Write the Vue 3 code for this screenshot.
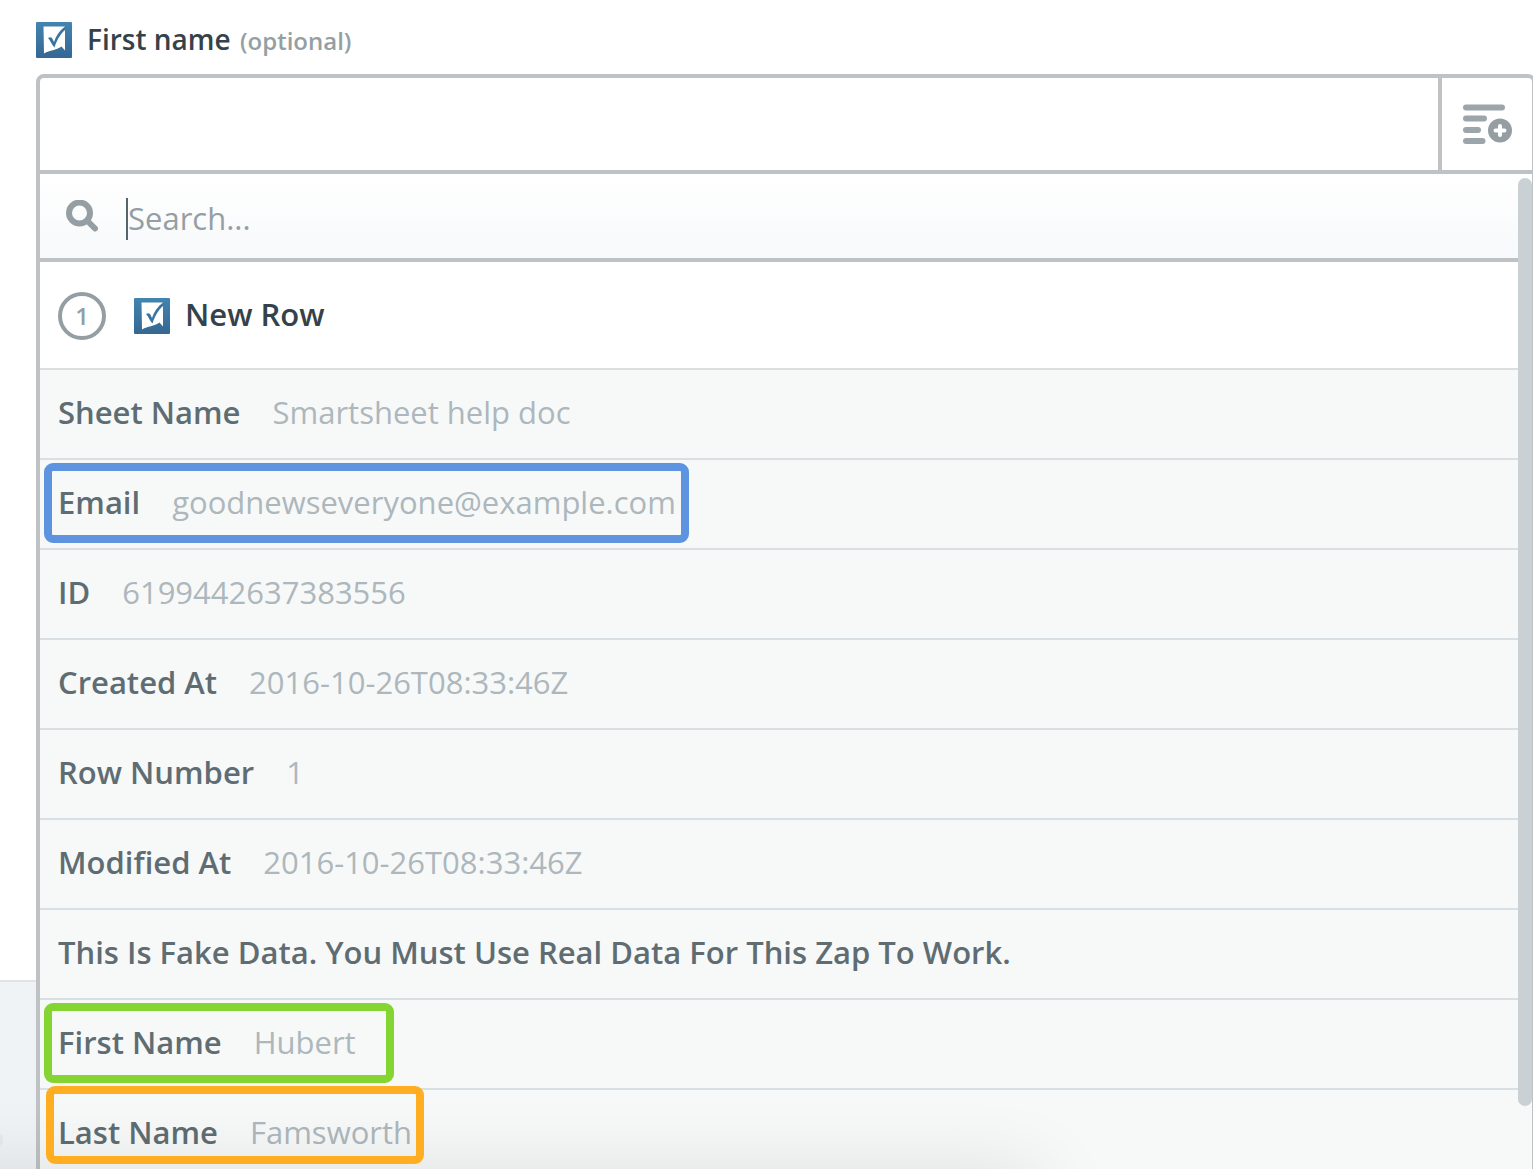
<script setup>
/**
 * Field mapper: text field with an open dropdown listing the trigger's data.
 */
import { ref, computed, onMounted } from 'vue'

const value = ref('')
const query = ref('')
const searchInput = ref(null)

const fields = [
  { label: 'Sheet Name', value: 'Smartsheet help doc' },
  { label: 'Email', value: 'goodnewseveryone@example.com', mark: 'blue' },
  { label: 'ID', value: '6199442637383556' },
  { label: 'Created At', value: '2016-10-26T08:33:46Z' },
  { label: 'Row Number', value: '1' },
  { label: 'Modified At', value: '2016-10-26T08:33:46Z' },
  { label: 'This Is Fake Data. You Must Use Real Data For This Zap To Work.', value: '' },
  { label: 'First Name', value: 'Hubert', mark: 'green' },
  { label: 'Last Name', value: 'Famsworth', mark: 'orange' },
]

const visible = computed(() =>
  fields.filter((f) => (f.label + ' ' + f.value).toLowerCase().includes(query.value.toLowerCase())),
)

onMounted(() => searchInput.value.focus())
</script>

<template>
  <main class="page">
    <div class="next-step"><span class="next-dot"></span></div>

    <svg width="0" height="0" class="defs" aria-hidden="true">
      <defs>
        <linearGradient id="sheet-blue" x1="0" y1="0" x2="0" y2="1">
          <stop offset="0" stop-color="#4384b0" />
          <stop offset="1" stop-color="#356792" />
        </linearGradient>
        <symbol id="sheet" viewBox="0 0 36 36">
          <rect width="36" height="36" rx="1" fill="url(#sheet-blue)" />
          <path d="M7.5 4.500H29V28.500l-3.500-4C20 28.500 14 28 8 31.500Z" fill="#fff" />
          <path d="M12 16c2.500-1.500 3.800-1 4.800 1.500l1.200 2.500C20 14 23.500 8.500 29 4.500V8C24.500 12 21 17.500 18.500 25.500c-2.500-2-4-7-6.500-9.500Z" fill="#3a75a2" />
        </symbol>
      </defs>
    </svg>

    <div class="field-label">
      <svg class="app-icon" aria-hidden="true"><use href="#sheet" /></svg>
      <label for="first-name">First name <small>(optional)</small></label>
    </div>

    <div class="mapper">
      <div class="value-row">
        <input id="first-name" v-model="value" class="value-input" type="text" />
        <button class="insert" type="button" aria-label="Insert a field">
          <svg viewBox="0 0 50 40" width="50" height="40" aria-hidden="true">
            <g stroke="#9ca6aa" stroke-width="6" stroke-linecap="round">
              <path d="M4 3.500H40M4 14.500H22M4 26H16M4 37H20.500" />
            </g>
            <circle cx="38" cy="26.500" r="12" fill="#959ea2" />
            <path d="M38 22v9M33.500 26.500h9" stroke="#fff" stroke-width="4" stroke-linecap="round" />
          </svg>
        </button>
      </div>

      <div class="dropdown">
        <div class="search">
          <svg viewBox="0 0 32 32" width="32" height="32" aria-hidden="true">
            <circle cx="13.500" cy="13" r="10.500" fill="none" stroke="#959fa3" stroke-width="6" />
            <path d="M21.500 21l7.500 7.500" stroke="#959fa3" stroke-width="6" stroke-linecap="round" />
          </svg>
          <div class="search-box">
            <input
              ref="searchInput"
              v-model="query"
              type="text"
              placeholder="Search..."
              aria-label="Search fields"
            />
          </div>
        </div>

        <div class="step">
          <span class="step-number">1</span>
          <svg class="app-icon" aria-hidden="true"><use href="#sheet" /></svg>
          <strong>New Row</strong>
        </div>

        <ul class="fields">
          <li v-for="f in visible" :key="f.label">
            <button type="button">
              <span class="name">{{ f.label }}</span>
              <span v-if="f.value" class="sample">{{ f.value }}</span>
            </button>
            <span v-if="f.mark" class="mark" :class="f.mark"></span>
          </li>
        </ul>
        <span class="thumb"></span>
      </div>
    </div>

    <div class="footer-shade"></div>
  </main>
</template>

<style>
body { margin: 0; background: #fff; }
</style>

<style scoped>
.page {
  position: relative;
  box-sizing: border-box;
  height: 100vh;
  padding: 20px 0 0 36px;
  overflow: hidden;
  font-family: "Open Sans", sans-serif;
  font-size: 31px;
  line-height: 40px;
  color: #354249;
}
.defs { position: absolute; }
.next-step {
  position: absolute;
  right: 0;
  bottom: 0;
  left: 0;
  height: 187px;
  background: #eff3f5;
  border-top: 2px solid #dfe4e6;
}
.next-dot { position: absolute; bottom: 20px; left: -15px; width: 18px; height: 18px; border-radius: 50%; background: #e6eaeb; }
.app-icon { flex: none; width: 36px; height: 36px; }

.field-label { display: flex; align-items: center; gap: 15px; height: 40px; margin-bottom: 14px; font-size: 28px; font-weight: 600; }
.field-label small { margin-left: 2px; font-size: 24px; color: #959fa3; }

.mapper { position: relative; margin-right: -3px; border: 4px solid #bec2c5; border-radius: 8px; background: #fff; }
.value-row { display: flex; height: 92px; border-bottom: 4px solid #bec2c5; }
.value-input { flex: 1; min-width: 0; padding: 0 18px; border: 0; outline: 0; background: none; font: inherit; color: inherit; }
.insert { display: flex; align-items: center; justify-content: center; width: 94px; padding: 0; border: 0; border-left: 4px solid #bec2c5; background: none; }

.dropdown { position: relative; background: #f7f9f9; }
.search { display: flex; align-items: center; gap: 28px; height: 84px; padding-left: 26px; border-bottom: 4px solid #bec2c5; background: linear-gradient(#fff, #f7f9fa); }
.search-box { flex: 1; padding-top: 6px; }
.search input { display: block; box-sizing: border-box; width: 100%; height: 42px; padding: 0 0 2px; border: 0; border-left: 2px solid #56656c; outline: 0; background: none; font: inherit; color: #354249; caret-color: transparent; }
.search input::placeholder { color: #959fa3; opacity: 1; }

.step { display: flex; align-items: center; box-sizing: border-box; height: 108px; padding: 2px 0 0 18px; border-bottom: 2px solid #d9dee1; background: #fff; }
.step-number { display: flex; align-items: center; justify-content: center; box-sizing: border-box; width: 48px; height: 48px; margin-right: 28px; border: 4px solid #959fa3; border-radius: 50%; font-size: 24px; font-weight: 600; color: #959fa3; }
.step strong { margin-left: 15px; padding-bottom: 4px; font-weight: 600; }

.fields { margin: 0; padding: 0; list-style: none; }
.fields li { position: relative; height: 88px; border-bottom: 2px solid #d9e0e3; }
.fields button { display: flex; align-items: center; gap: 32px; width: 100%; height: 88px; padding: 0 18px 4px; border: 0; background: none; font: inherit; text-align: left; white-space: nowrap; }
.name { font-weight: 600; color: #5f6d73; }
.sample { color: #adb7bc; }

/* Coloured frames laid over the mapped fields */
.mark { position: absolute; top: 3px; left: 4px; z-index: 1; box-sizing: border-box; height: 80px; border: 8px solid; border-radius: 9px; pointer-events: none; }
.mark.blue { width: 645px; border-color: #5e93e0; }
.mark.green { width: 350px; border-color: #84d432; }
.mark.orange { top: -4px; left: 6px; width: 378px; height: 78px; border-color: #ffae22; }

.thumb { position: absolute; top: 4px; right: 0; width: 14px; height: 928px; border-radius: 7px; background: #c9d1d4; }
.footer-shade { position: absolute; bottom: -40px; left: -100px; width: 1130px; height: 20px; box-shadow: 0 0 80px 10px rgba(0, 0, 0, 0.16); pointer-events: none; }
</style>
